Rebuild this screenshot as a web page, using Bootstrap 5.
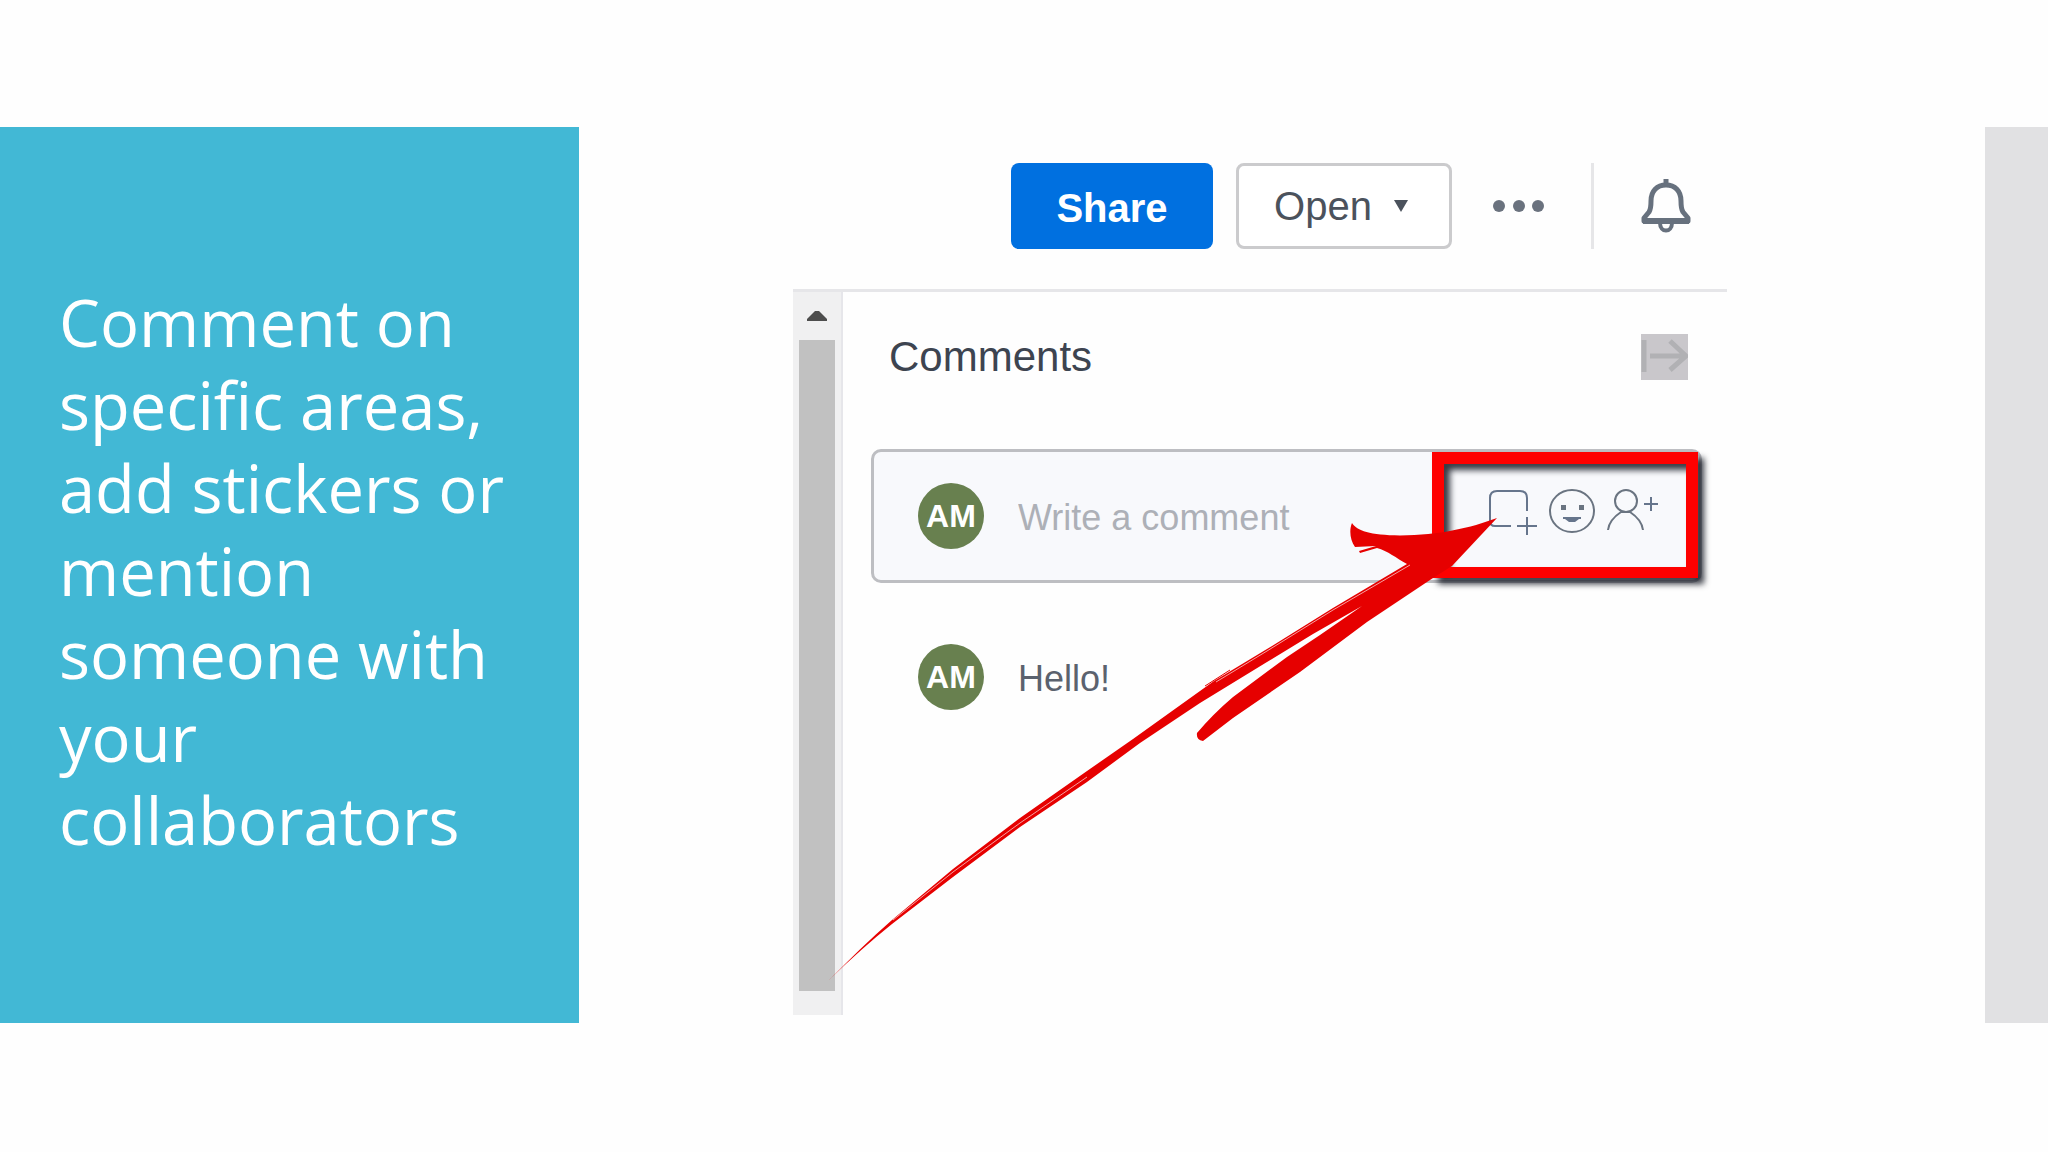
<!DOCTYPE html>
<html lang="en">
<head>
<meta charset="utf-8">
<meta name="viewport" content="width=device-width, initial-scale=1">
<title>Comment on specific areas</title>
<link href="https://cdn.jsdelivr.net/npm/bootstrap@5.3.0/dist/css/bootstrap.min.css" rel="stylesheet">
<style>
  body { font-family: "Liberation Sans", Arial, sans-serif; background: #fefefe; }
  .slide { min-height: 100vh; padding: 127px 0 129px; }
  .slide-title { flex: 0 0 579px; background: #42b8d5; padding: 0 40px 8px 59px; }
  .slide-title h1 { font: 400 65px/83px "Open Sans", "Noto Sans", sans-serif; color: #fff; }
  .slide-edge { flex: 0 0 63px; background: #e1e1e3; }
  .stage { padding: 36px 32px 8px 214px; }
  .shot { max-width: 934px; }

  .tool-row { height: 86px; margin-bottom: 40px; padding-right: 36px; }
  .tool-btn { font-size: 40px; line-height: 44px; border-radius: 8px; height: 86px; }
  .btn-share { width: 202px; background: #0070e0; color: #fff; font-weight: 700; margin-right: 23px; padding: 4px 0 0; }
  .btn-open { width: 216px; background: #fff; border: 3px solid #cbcbcd; color: #4b525c; margin-right: 40px; padding: 0 6px 0 0; gap: 22px; }
  .rule { width: 3px; height: 86px; background: #e6e6e8; margin: 0 47px 0 45px; }

  .panel { border-top: 3px solid #e6e6e9; }
  .scroll-track { flex: 0 0 50px; background: #f0f0f1; border-right: 2px solid #e6e6ea; padding: 18px 6px 24px; }
  .scroll-thumb { width: 36px; height: 651px; background: #c1c1c1; margin-top: 19px; }

  .panel-head { padding: 42px 39px 69px 46px; }
  .panel-head h2 { font-size: 42px; line-height: 46px; color: #3d4450; }
  .collapse-btn { background: #c9c7cb; width: 47px; height: 46px; }

  .comment-box { margin: 0 25px 0 28px; height: 134px; border: 3px solid #bdbec2; border-radius: 10px; background: #f8f9fc; padding-left: 44px; }
  .avatar { flex: 0 0 66px; height: 66px; border-radius: 50%; background: #68804f; color: #fff; font-size: 32px; font-weight: 700; margin-right: 34px; }
  .write { font-size: 36px; color: #6b7280; }
  .write.form-control { padding: 4px 0 0; }
  .write::placeholder { color: #adb0b7; opacity: 1; }
  .tools { gap: 8px; padding: 0 39px 0 44px; }
  .marker { inset: 0 1px 2px -12px; border: 12px solid #fe0000; border-bottom-width: 11px; filter: drop-shadow(6px 6px 3px rgba(20,24,34,.85)); pointer-events: none; }
  .post { padding: 61px 25px 0 75px; }
  .post p { font-size: 36px; line-height: 46px; color: #5b626e; padding-top: 4px; }
  .arrow { left: 0; top: 0; pointer-events: none; overflow: visible; }
  svg { display: block; flex: none; }
</style>
</head>
<body>
<main class="slide d-flex align-items-stretch">
  <section class="slide-title d-flex align-items-center">
    <h1 class="m-0">Comment on specific areas, add stickers or mention someone with your collaborators</h1>
  </section>

  <section class="stage flex-grow-1">
    <div class="shot position-relative">
      <div class="tool-row d-flex align-items-center justify-content-end">
        <button type="button" class="btn tool-btn btn-share border-0">Share</button>
        <button type="button" class="btn tool-btn btn-open d-flex align-items-center justify-content-center">Open
          <svg width="14" height="12" viewBox="0 0 14 12"><path d="M0 0h14L7 12z" fill="#4b525c"/></svg>
        </button>
        <button type="button" class="btn p-0 border-0" aria-label="More">
          <svg width="54" height="14" viewBox="0 0 54 14" fill="#6a727e"><circle cx="7" cy="7" r="6"/><circle cx="27" cy="7" r="6"/><circle cx="46" cy="7" r="6"/></svg>
        </button>
        <div class="rule"></div>
        <button type="button" class="btn p-0 border-0" aria-label="Notifications">
          <svg width="50" height="56" viewBox="0 0 50 56" fill="none" stroke="#67717e" stroke-width="5">
            <path d="M25 1v7"/><path d="M3 43v-3l5-6c2-3 2-6 2-11 0-10 6-16 15-16s15 6 15 16c0 5 0 8 2 11l5 6v3z" stroke-linejoin="round"/>
            <path d="M2 43h46" stroke-width="6"/><path d="M19 45c0 10 12 10 12 0" stroke-width="4"/>
          </svg>
        </button>
      </div>

      <div class="panel d-flex">
        <div class="scroll-track" aria-hidden="true">
          <svg class="mx-auto" width="20" height="11" viewBox="0 0 20 11"><path d="M0 11v-2L8 1h4l8 8v2z" fill="#4d4d4d"/></svg>
          <div class="scroll-thumb"></div>
        </div>
        <div class="flex-grow-1">
          <div class="panel-head d-flex justify-content-between align-items-center">
            <h2 class="m-0 fw-normal">Comments</h2>
            <button type="button" class="collapse-btn btn rounded-0 p-0 border-0" aria-label="Collapse">
              <svg width="47" height="46" viewBox="0 0 47 46" fill="none" stroke="#b1b1b4" stroke-width="5"><path d="M3 6v32M9 22h34M29 7l16 15-16 14"/></svg>
            </button>
          </div>

          <form class="comment-box d-flex align-items-center">
            <span class="avatar d-flex align-items-center justify-content-center">AM</span>
            <input class="write form-control border-0 bg-transparent shadow-none" type="text" placeholder="Write a comment" aria-label="Write a comment">
            <div class="tools position-relative d-flex align-items-center align-self-stretch">
              <button type="button" class="btn p-0 border-0" aria-label="Mark area">
                <svg width="52" height="56" viewBox="1487 488 52 56" fill="none" stroke="#66758c" stroke-width="2"><path d="M1510 526h-16q-5 0-5-5v-23q0-7 7-7h23q7 0 7 7v13M1516 526h20M1526 517v18"/></svg>
              </button>
              <button type="button" class="btn p-0 border-0" aria-label="Sticker">
                <svg width="48" height="56" viewBox="1547 488 48 56" fill="none" stroke="#6a7481" stroke-width="2"><ellipse cx="1571" cy="511" rx="22" ry="21"/><path d="M1560 505h5v5h-5zM1578 505h5v5h-5z" fill="#6a7481" stroke="none"/><path d="M1562 517h18v2h-2l-4 3h-6l-4-3h-2z" fill="#66758c" stroke="none"/></svg>
              </button>
              <button type="button" class="btn p-0 border-0" aria-label="Mention">
                <svg width="56" height="56" viewBox="1604 488 56 56" fill="none" stroke="#6a7481" stroke-width="2"><circle cx="1626" cy="501" r="11"/><path d="M1608 530c1-9 7-14 13-18h9c6 4 12 9 13 18"/><path d="M1644 504h14M1651 497v14" stroke="#66758c"/></svg>
              </button>
              <span class="marker position-absolute"></span>
            </div>
          </form>

          <article class="post d-flex align-items-center">
            <span class="avatar d-flex align-items-center justify-content-center">AM</span>
            <p class="m-0">Hello!</p>
          </article>
        </div>
      </div>

      <!-- Brush-stroke arrow, drawn over the panel -->
      <svg class="arrow position-absolute" width="934" height="852" viewBox="793 163 934 852" fill="#e60000" aria-hidden="true">
        <path d="M829 980C850 959 870 939 892 920L953 869 1020 818 1087 771 1133 739 1200 691 1214 681 1267 649 1333 608 1407 564C1396 558 1388 551 1377 548L1360 553 1359 551 1376 546 1355 547C1350 540 1349 530 1352 523 1357 531 1370 535 1400 535.500 1440 535 1470 528 1497 518L1452 566 1433 578 1367 622 1300 672 1233 718 1203 741Q1196 740 1197 733 1213 714 1233 697L1287 657 1320 635 1362 606 1313 634 1267 662 1200 703 1140 743 1087 782 1020 827 953 877 892 924Q862 948 829 980Z"/>
        <path d="M1205 686L1230 670" fill="none" stroke="#e60000" stroke-width="1"/>
        <path d="M893 920L953 872 1020 823 1087 777M1216 682L1267 651 1333 610 1410 565" fill="none" stroke="#f7a0a0" stroke-width="1"/>
      </svg>
    </div>
  </section>

  <div class="slide-edge"></div>
</main>
<script src="https://cdn.jsdelivr.net/npm/bootstrap@5.3.0/dist/js/bootstrap.bundle.min.js"></script>
</body>
</html>
